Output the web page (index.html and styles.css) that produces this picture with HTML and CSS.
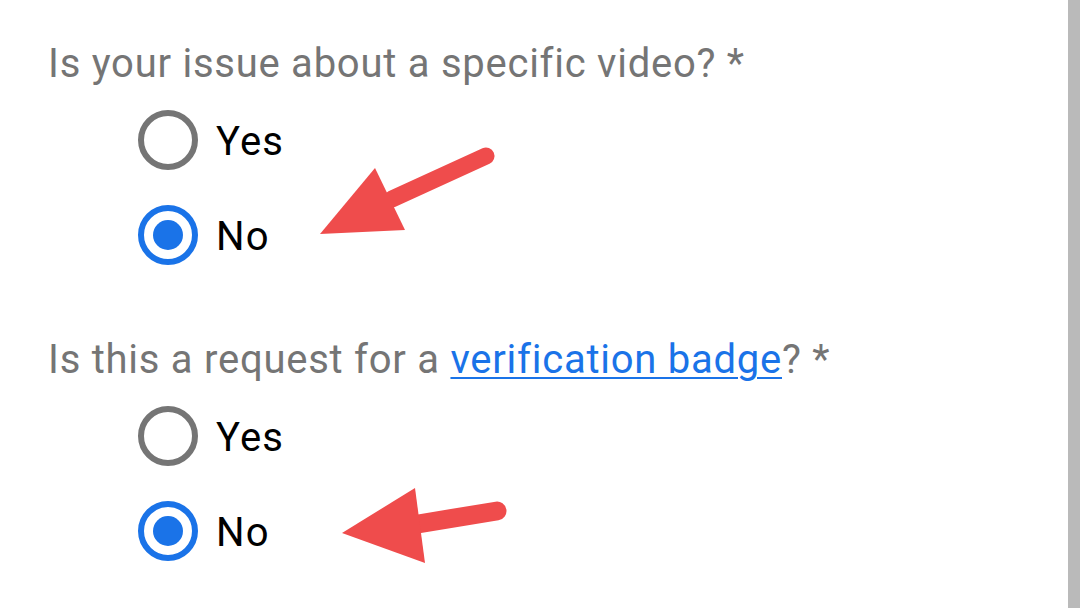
FILE: index.html
```html
<!DOCTYPE html>
<html>
<head>
<meta http-equiv="Content-Type" content="text/html; charset=utf-8"/>
<title>Form questions</title>
<link rel="stylesheet" href="styles.css">
</head>
<body>
<div class="page">
  <div class="content">
    <div class="question first">
      <p class="label">Is your issue about a specific video? *</p>
      <div class="option"><span class="radio"></span><span class="text">Yes</span></div>
      <div class="option"><span class="radio checked"></span><span class="text">No</span></div>
    </div>

    <div class="question">
      <p class="label">Is this a request for a <a href="#">verification badge</a>? *</p>
      <div class="option"><span class="radio"></span><span class="text">Yes</span></div>
      <div class="option"><span class="radio checked"></span><span class="text">No</span></div>
    </div>

    <!-- annotation arrows drawn over the form -->
    <svg class="arrows" width="1068" height="608" viewBox="0 0 1068 608">
      <line x1="486" y1="156" x2="392" y2="199" stroke="#ef4c4c" stroke-width="17" stroke-linecap="round"/>
      <polygon points="320,234 375,168 405,230" fill="#ef4c4c"/>
      <line x1="497" y1="511" x2="418" y2="524" stroke="#ef4c4c" stroke-width="19" stroke-linecap="round"/>
      <polygon points="342,533 415,488 425,563" fill="#ef4c4c"/>
    </svg>
  </div>
  <div class="scrollbar"></div>
</div>
</body>
</html>
```

FILE: styles.css
```css
html, body {
  margin: 0;
  padding: 0;
  background-color: #fff;
}

body {
  font-family: Roboto, "Liberation Sans", sans-serif;
}

.page {
  display: flex;
  width: 1080px;
  height: 608px;
  overflow: hidden;
}

.content {
  flex: 1;
  position: relative;
  padding: 39px 0 0 48px;
}

.scrollbar {
  width: 12px;
  background-color: #bababa;
}

.question {
  margin-top: 53px;
}

.question.first {
  margin-top: 0;
}

.label {
  margin: 0 0 3px 0;
  font-size: 40px;
  line-height: 50px;
  letter-spacing: 0.75px;
  color: #757575;
}

.label a {
  color: #1a73e8;
  text-decoration: underline;
  text-underline-offset: 4px;
  text-decoration-thickness: 2px;
}

.option {
  display: flex;
  align-items: center;
  height: 95px;
  padding-left: 90px;
}

.radio {
  box-sizing: border-box;
  width: 60px;
  height: 60px;
  border: 6px solid #757575;
  border-radius: 50%;
  display: flex;
  align-items: center;
  justify-content: center;
}

.radio.checked {
  border-color: #1a73e8;
}

.radio.checked::after {
  content: "";
  width: 30px;
  height: 30px;
  border-radius: 50%;
  background-color: #1a73e8;
}

.text {
  margin-left: 18px;
  padding-top: 4px;
  font-size: 40px;
  letter-spacing: 1.2px;
  color: #000;
}

.arrows {
  position: absolute;
  left: 0;
  top: 0;
}
```
